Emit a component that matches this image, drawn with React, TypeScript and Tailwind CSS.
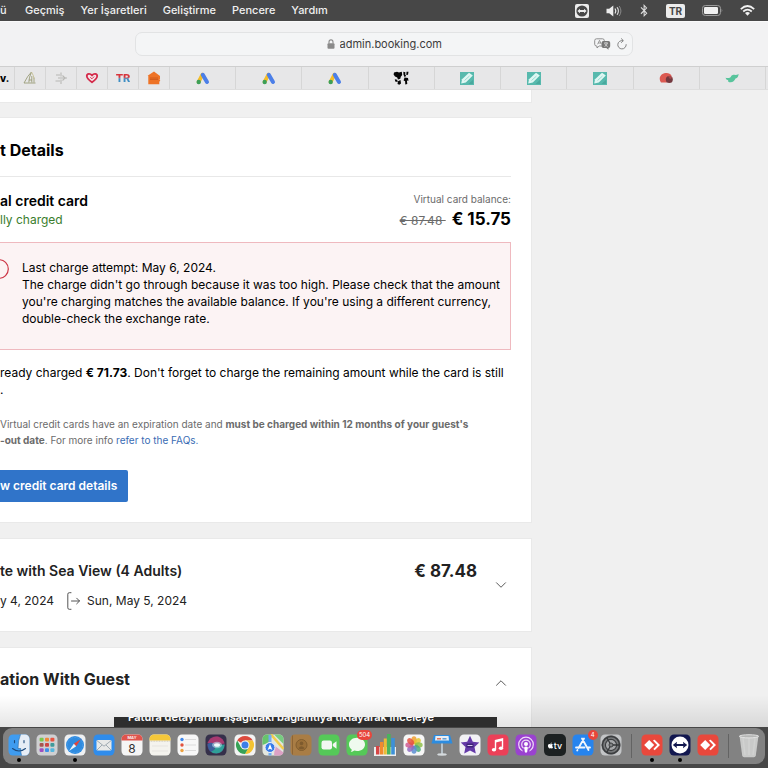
import React from "react";
import { ChevronDown, ChevronUp } from "lucide-react";
import { FaApple, FaBluetoothB } from "react-icons/fa";

const menuItems = ["Geçmiş", "Yer İşaretleri", "Geliştirme", "Pencere", "Yardım"];

const TeamViewerGlyph = () => (
  <svg viewBox="0 0 14 14" className="h-[14px] w-[14px]" aria-hidden="true">
    <rect width="14" height="14" rx="2" fill="#ececec" />
    <circle cx="7" cy="7" r="5.6" fill="#474747" />
    <path d="M2.4 7 5 4.8v1.3h4V4.800L11.600 7 9 9.200V7.900H5v1.300z" fill="#ececec" />
  </svg>
);

const VolumeGlyph = () => (
  <svg viewBox="0 0 16 14" className="h-[14px] w-[16px]" aria-hidden="true">
    <path d="M0.500 4.800h2.700L7.300 1.500v11L3.200 9.200H0.500z" fill="#ececec" />
    <path d="M9.200 5q1.300 2 0 4" fill="none" stroke="#ececec" strokeWidth="1.200" strokeLinecap="round" />
    <path d="M11.300 3.600q2.300 3.400 0 6.800" fill="none" stroke="#cfcfcf" strokeWidth="1.200" strokeLinecap="round" />
    <path d="M13.400 2.300q3.300 4.700 0 9.400" fill="none" stroke="#8a8a8a" strokeWidth="1" strokeLinecap="round" />
  </svg>
);

const BatteryGlyph = () => (
  <svg viewBox="0 0 21 11" className="h-[11px] w-[21px]" aria-hidden="true">
    <rect x="0.500" y="0.500" width="18" height="10" rx="2.800" fill="none" stroke="#9b9b9b" />
    <rect x="2" y="2" width="14" height="7" rx="1.300" fill="#f0f0f0" />
    <path d="M19.700 3.600q1.300 1.900 0 3.800z" fill="#9b9b9b" />
  </svg>
);

const WifiGlyph = () => (
  <svg viewBox="0 0 15 11" className="h-[11px] w-[15px]" fill="none" stroke="#f2f2f2" strokeWidth="1.700" aria-hidden="true">
    <path d="M0.800 4.100q6.700-6.200 13.400 0" />
    <path d="M3.200 6.500q4.300-3.900 8.600 0" />
    <path d="M5 8.100q2.500-2 5 0L7.500 10.700z" fill="#f2f2f2" stroke="none" />
  </svg>
);

const MenuBar = () => (
  <header className="flex h-[21px] shrink-0 items-center justify-between overflow-hidden bg-[#474747] pr-[13px] text-[11px] font-medium text-[#f0f0f0]">
    <nav className="flex items-center gap-4 whitespace-nowrap">
      <span className="w-[9px]">ü</span>
      {menuItems.map((item) => (
        <button key={item} type="button">
          {item}
        </button>
      ))}
    </nav>
    <div className="flex items-center gap-[17px]">
      <TeamViewerGlyph />
      <VolumeGlyph />
      <FaBluetoothB className="h-[13px] w-[10px] text-[#dcdcdc]" />
      <span className="flex h-[14px] w-[19px] items-center justify-center rounded-xs bg-[#ececec] text-[10px] leading-none font-bold text-[#474747]">
        TR
      </span>
      <BatteryGlyph />
      <WifiGlyph />
    </div>
  </header>
);

const Toolbar = () => (
  <div className="flex h-[45px] shrink-0 items-center border-t border-[#fafafa] bg-[#f2f2f3] px-[135px]">
    <div className="relative flex h-6 flex-1 items-center justify-center gap-[5px] rounded-[7px] border border-[#e2e3e4] bg-[#f4f5f6]">
      <svg viewBox="0 0 8 10" className="h-[10px] w-[8px]" aria-hidden="true">
        <rect x="0.500" y="4.300" width="7" height="5.400" rx="1" fill="#8a8a8a" />
        <path d="M2 4.500V2.900a2 2 0 0 1 4 0v1.600" fill="none" stroke="#8a8a8a" strokeWidth="1.100" />
      </svg>
      <input
        type="text"
        aria-label="Address"
        defaultValue="admin.booking.com"
        className="w-[102px] bg-transparent text-[11px] text-[#3c3c3c] outline-none"
      />
      <div className="absolute right-1 flex items-center gap-[5px]">
        <button type="button" aria-label="Translate">
          <svg viewBox="0 0 17 12" className="h-[12px] w-[17px]" aria-hidden="true">
            <path
              d="M2.500 0.800h6a1.800 1.800 0 0 1 1.800 1.800v3.600A1.800 1.800 0 0 1 8.500 8H5.200L3 10V8h-.5A1.800 1.800 0 0 1 .7 6.200V2.600A1.800 1.800 0 0 1 2.500.8z"
              fill="#f4f5f6"
              stroke="#858585"
              strokeWidth="0.900"
            />
            <path d="M3.600 6.300 5.500 2.300l1.900 4M4.300 5h2.400" fill="none" stroke="#858585" strokeWidth="0.800" />
            <path d="M9.300 3h5.200a1.700 1.700 0 0 1 1.700 1.700v3.600a1.700 1.700 0 0 1-1.700 1.700v1.800L12.300 10h-3a1.700 1.700 0 0 1-1.700-1.700V4.700A1.700 1.700 0 0 1 9.300 3z" fill="#777" />
            <path d="M10 5h4M12 4.200V5M10.500 8.500Q13 7.500 13.300 5M10.700 5.500q.8 2.200 3 3" fill="none" stroke="#e8e8e8" strokeWidth="0.700" />
          </svg>
        </button>
        <button type="button" aria-label="Reload">
          <svg viewBox="0 0 12 12" className="h-[12px] w-[12px]" fill="none" stroke="#777" strokeWidth="0.900" strokeLinecap="round" aria-hidden="true">
            <path d="M10.200 6.600A4.200 4.200 0 1 1 6.800 2.600" />
            <path d="M5.400 0.700 7.300 2.600 5.400 4.500" />
          </svg>
        </button>
      </div>
    </div>
  </div>
);

const SailTab = () => (
  <svg viewBox="0 0 14 14" className="h-[14px] w-[14px]" fill="none" stroke="#9a9c78" strokeWidth="0.900" aria-hidden="true">
    <path d="M8.500 1Q5 4 1 12h11.500" />
    <path d="M8.500 1Q6 6 5.800 11.500M8.800 5v6.500M11 6.500v5M5.800 9H9" />
    <path d="M8.500 1q2.500 4 2.500 7" stroke="#c5bf92" />
  </svg>
);

const ArrowsTab = () => (
  <svg viewBox="0 0 14 14" className="h-[14px] w-[14px]" fill="none" stroke="#b8b8b4" strokeWidth="1.100" aria-hidden="true">
    <path d="M2 4h4M1.500 10h4.500M4 7h9M7 1.500v4M7 8.500V13" />
    <path d="M8.500 4.500 11 7 8.500 9.500" />
  </svg>
);

const HeartTab = () => (
  <svg viewBox="0 0 14 12" className="h-[12px] w-[14px]" aria-hidden="true">
    <path
      d="M7 10.300Q1.800 6.600 1.800 4C1.800 1.400 5.200 1 7 3.500 8.800 1 12.200 1.400 12.200 4 12.200 6.600 7 10.300 7 10.300z"
      fill="#f5e6ea"
      stroke="#d42b4b"
      strokeWidth="1.800"
      strokeLinejoin="round"
    />
    <path d="M5.200 5.300 7 6.800l2.200-2.300" fill="none" stroke="#d42b4b" strokeWidth="0.900" />
  </svg>
);

const HouseTab = () => (
  <svg viewBox="0 0 14 14" className="h-[14px] w-[14px]" aria-hidden="true">
    <path d="M7 0.500 13 5v3.200h-.7l1 1.300-1 1.200v2.500H1.300V5L.6 4.800z" fill="#ee7326" />
    <path d="M3 7h8M3 8.400h8" stroke="#c9551a" strokeWidth="0.800" />
  </svg>
);

const AdsTab = () => (
  <svg viewBox="0 0 14 13" className="h-[13px] w-[14px]" aria-hidden="true">
    <path d="M6.300 2.800 2.600 9.800" stroke="#f5bd28" strokeWidth="3.800" strokeLinecap="round" />
    <path d="M6.800 2.800 11 10" stroke="#4c7fe8" strokeWidth="4" strokeLinecap="round" />
    <circle cx="2.700" cy="10" r="2.200" fill="#3c9f57" />
  </svg>
);

const MapTab = () => (
  <svg viewBox="0 0 16 14" className="h-[14px] w-[16px]" fill="#050505" aria-hidden="true">
    <path d="M1 1.500 4 .8l2 .7L8.800.8 9.200 4 7.800 5.800 7.300 7.800 5 8.500 4.200 6.500 2 5.500.6 3.500zM10.300.8l2.100.4-.2 2.200 1 1.600-1.700 1-1-2.200zM13.500.8h2l-.5 3-1.700.3zM1.800 8.200l2.400.5.5 2.400-2.500-.5zM5 10.300l2.500-1.200.5 3.400-1.700 1.300-1.800-.9zM11.500 6.600l3.500.5.5 2.700-1.600-.3.400 3.500-2 .5-.2-3.300-1.500-.6z" />
  </svg>
);

const PencilTab = () => (
  <svg viewBox="0 0 14 13" className="h-[13px] w-[14px]" aria-hidden="true">
    <rect width="14" height="13" fill="#57b9ad" />
    <path d="M1.200 11.500 2 7.200 9 .7l3.800 2.700-7 7z" fill="#dff7f3" />
    <path d="M4.500 8.500 9.500 4" stroke="#9bdbd2" strokeWidth="1" />
    <path d="M8.500 12 13 7.700V12z" fill="#49a89d" />
  </svg>
);

const CirclesTab = () => (
  <svg viewBox="0 0 14 12" className="h-[12px] w-[14px]" aria-hidden="true">
    <path d="M2 10.500C-.8 7 1.200 1.500 6.500 1c3-.3 4.800.6 6 2.500L8 10.500z" fill="#dc5a52" />
    <circle cx="10.300" cy="7.400" r="3.500" fill="#74393f" />
    <path d="M9 4.200a3.600 3.600 0 0 1 4.500 1.500L11 7z" fill="#a8484a" />
  </svg>
);

const BirdTab = () => (
  <svg viewBox="0 0 14 10" className="h-[10px] w-[14px]" aria-hidden="true">
    <path d="M0.500 4.800Q3.500 5.600 5.500 4.200 6.500 1.200 9.200 1.800 11.500 2.300 13.600 1 13.500 4.500 10.500 5.600 9 9.400 5.500 9.300 2.500 9.300 3.200 7.300 1 7 .5 4.800z" fill="#58c49c" />
  </svg>
);

const smallTabs = [
  { name: "Sail", icon: <SailTab /> },
  { name: "Arrows", icon: <ArrowsTab /> },
  { name: "Favorites", icon: <HeartTab /> },
  {
    name: "TR",
    icon: (
      <span className="bg-linear-to-b from-[#d8343c] from-45% to-[#3f8fc4] to-55% bg-clip-text text-[11px] font-extrabold text-transparent">
        TR
      </span>
    ),
  },
  { name: "House", icon: <HouseTab /> },
];

const wideTabs = [
  { name: "Ads 1", icon: <AdsTab /> },
  { name: "Ads 2", icon: <AdsTab /> },
  { name: "Ads 3", icon: <AdsTab /> },
  { name: "Map", icon: <MapTab /> },
  { name: "Notes 1", icon: <PencilTab /> },
  { name: "Notes 2", icon: <PencilTab /> },
  { name: "Notes 3", icon: <PencilTab /> },
  { name: "Circles", icon: <CirclesTab /> },
  { name: "Bird", icon: <BirdTab /> },
];

const TabBar = () => (
  <div className="flex h-6 shrink-0 border-y border-t-[#cfcfcf] border-b-[#dedede] bg-[#e7e7e8] pr-[2px]">
    <button type="button" className="flex w-[15px] items-center border-r border-[#d6d6d6] text-[10px] font-extrabold text-black">
      v.
    </button>
    {smallTabs.map((tab) => (
      <button key={tab.name} type="button" aria-label={tab.name} className="flex w-[31px] items-center justify-center border-r border-[#d6d6d6]">
        {tab.icon}
      </button>
    ))}
    {wideTabs.map((tab) => (
      <button key={tab.name} type="button" aria-label={tab.name} className="flex flex-1 items-center justify-center border-r border-[#d6d6d6]">
        {tab.icon}
      </button>
    ))}
  </div>
);

const PaymentCard = () => (
  <section className="border-y border-r border-[#e9e9e9] bg-white pr-5 pb-5">
    <h2 className="border-b border-[#e8e8e8] pt-5 pb-[14px] text-[16px] leading-6 font-bold">t Details</h2>
    <div className="flex items-start justify-between pt-[14px]">
      <div>
        <h3 className="text-[14px] leading-5 font-semibold">al credit card</h3>
        <p className="text-[12px] leading-[17px] text-[#3a7d2c]">lly charged</p>
      </div>
      <div className="text-right">
        <p className="text-[10px] leading-4 text-[#6b6b6b]">Virtual card balance:</p>
        <p className="text-[17px] leading-6 font-bold">
          <s className="mr-1.5 text-[12px] font-normal whitespace-pre text-[#6b6b6b]">€ 87.48 </s>€ 15.75
        </p>
      </div>
    </div>
    <div className="mt-[9px] flex gap-[13px] border border-l-0 border-[#efb9bf] bg-[#fcf3f4] pt-4 pb-[22px]">
      <svg viewBox="0 0 9 20" className="h-5 w-[9px] shrink-0" aria-hidden="true">
        <circle cx="-1" cy="10" r="9.300" fill="none" stroke="#cc3344" strokeWidth="1.200" />
      </svg>
      <p className="text-[12px] leading-[17px]">
        Last charge attempt: May 6, 2024.
        <br />
        The charge didn't go through because it was too high. Please check that the amount
        <br />
        you're charging matches the available balance. If you're using a different currency,
        <br />
        double-check the exchange rate.
      </p>
    </div>
    <p className="mt-[14px] text-[12px] leading-[17px] whitespace-nowrap">
      ready charged <b>€ 71.73</b>. Don't forget to charge the remaining amount while the card is still
      <br />.
    </p>
    <p className="mt-[18px] text-[10px] leading-4 whitespace-nowrap text-[#6b6b6b]">
      Virtual credit cards have an expiration date and <b>must be charged within 12 months of your guest's</b>
      <br />
      <b>-out date</b>. For more info{" "}
      <a href="#faqs" className="text-[#3a6cb4]">
        refer to the FAQs.
      </a>
    </p>
    <button type="button" className="mt-[22px] block h-8 w-32 rounded-r-xs bg-[#3074c9] pr-[11px] text-right text-[12px] font-semibold whitespace-nowrap text-white">
      w credit card details
    </button>
  </section>
);

const RoomCard = () => (
  <section className="mt-[15px] flex items-start justify-between border-y border-r border-[#e9e9e9] bg-white pt-5 pr-[21px] pb-5 text-[#222]">
    <div>
      <h2 className="text-[14px] leading-6 font-semibold">te with Sea View (4 Adults)</h2>
      <div className="mt-2 flex items-center gap-[13px] text-[12px] leading-5">
        <span>y 4, 2024</span>
        <span className="flex items-center gap-[6px]">
          <svg viewBox="0 0 14 18" className="h-[18px] w-[14px]" fill="none" stroke="#555" strokeWidth="1" strokeLinecap="round" strokeLinejoin="round" aria-hidden="true">
            <path d="M4 0.700H2.300Q.8.700.8 2.200v13.600q0 1.500 1.500 1.500H4" />
            <path d="M4.500 9h8M9.700 6.200 12.500 9l-2.800 2.800" />
          </svg>
          Sun, May 5, 2024
        </span>
      </div>
    </div>
    <div className="flex items-start gap-[15px]">
      <strong className="text-[17px] leading-6">€ 87.48</strong>
      <button type="button" aria-label="Expand room" className="pt-[17px]">
        <ChevronDown className="h-[18px] w-[18px] text-[#555]" strokeWidth={1.3} />
      </button>
    </div>
  </section>
);

const ConversationCard = () => (
  <section className="mt-[15px] flex h-[100px] items-start justify-between border-y border-r border-[#e9e9e9] bg-white pt-[19px] pr-[21px] text-[#222]">
    <h2 className="text-[16px] leading-6 font-bold">ation With Guest</h2>
    <button type="button" aria-label="Collapse conversation" className="pt-[7px]">
      <ChevronUp className="h-[18px] w-[18px] text-[#555]" strokeWidth={1.3} />
    </button>
  </section>
);

// All dock drawings share a 22 unit square.
const Tile: React.FC<{ fill: string; children?: React.ReactNode }> = ({ fill, children }) => (
  <svg viewBox="0 0 22 22" className="h-[22px] w-[22px]" aria-hidden="true">
    <rect x="0.500" y="0.500" width="21" height="21" rx="4.500" fill={fill} />
    {children}
  </svg>
);

const Finder = () => (
  <Tile fill="#3f9cf0">
    <path d="M12.500.5H17a4.500 4.500 0 0 1 4.500 4.500v12a4.500 4.500 0 0 1-4.500 4.500h-3.500q-1-3.500-.8-7H10Q10 6 12.500.5z" fill="#e6edf6" />
    <path d="M6.500 6.500v2.300M16 6.500v2.300M4.500 14.500q6.500 5 13 0" fill="none" stroke="#1d4a7c" strokeWidth="1.100" strokeLinecap="round" />
    <path d="M12.500.5Q10 6 10 14.500h2.700q-.2 3.500.8 7" fill="none" stroke="#27679f" strokeWidth="0.600" />
  </Tile>
);

const launchpadDots = ["#7ac74c", "#f0883a", "#e8533f", "#a8544e", "#cc4545", "#3f9a9a", "#9e4fc0", "#3f8fe8", "#55b8e0"];

const Launchpad = () => (
  <Tile fill="#cfd0d2">
    {launchpadDots.map((color, i) => (
      <rect key={color} x={3.6 + (i % 3) * 5.4} y={3.8 + Math.floor(i / 3) * 5.2} width="4" height="3.800" rx="1" fill={color} />
    ))}
  </Tile>
);

const Safari = () => (
  <Tile fill="#eef0f2">
    <circle cx="11" cy="11" r="9" fill="#2e8be0" />
    <circle cx="11" cy="11" r="7.600" fill="none" stroke="#8cc1f0" strokeWidth="0.500" strokeDasharray="0.500 1" />
    <path d="M17 5 12.200 12.200 9.800 9.800z" fill="#e2453c" />
    <path d="M5 17 9.800 9.800l2.400 2.400z" fill="#f0f4f8" />
  </Tile>
);

const Mail = () => (
  <Tile fill="#2f8ceb">
    <rect x="3.500" y="6" width="15" height="10.500" rx="1.200" fill="#e7e9e8" />
    <path d="m4 6.700 7 5.500 7-5.500M4 16l5-5M18 16l-5-5" fill="none" stroke="#8d9aa4" strokeWidth="0.800" />
  </Tile>
);

const Calendar = () => (
  <Tile fill="#f5f5f5">
    <path d="M5 .5h12A4.500 4.500 0 0 1 21.500 5v1.500H.5V5A4.500 4.500 0 0 1 5 .5z" fill="#e0544c" />
    <text x="11" y="5.300" textAnchor="middle" fontSize="4" fontWeight="600" fill="#fff">
      MAY
    </text>
    <text x="11" y="18.500" textAnchor="middle" fontSize="12" fill="#333">
      8
    </text>
  </Tile>
);

const Notes = () => (
  <Tile fill="#f4f3ee">
    <path d="M5 .5h12A4.500 4.500 0 0 1 21.500 5v1.500H.5V5A4.500 4.500 0 0 1 5 .5z" fill="#f5c83a" />
    <path d="M0.500 7.200h21" stroke="#aaa48c" strokeWidth="0.600" strokeDasharray="0.800 0.800" />
    <path d="M3 12h16M3 17h16" stroke="#dddcd6" strokeWidth="0.600" />
  </Tile>
);

const Reminders = () => (
  <Tile fill="#f7f7f7">
    <path d="M8 5.500h11M8 11h11M8 16.500h11" stroke="#cfcfcf" strokeWidth="0.700" />
    <circle cx="5" cy="5.500" r="1.700" fill="#3e86ea" />
    <circle cx="5" cy="11" r="1.700" fill="#e1523f" />
    <circle cx="5" cy="16.500" r="1.700" fill="#eda13f" />
  </Tile>
);

const Siri = () => (
  <Tile fill="#35304a">
    <circle cx="11" cy="11" r="9" fill="#4c3358" />
    <path d="M2.500 9Q5.500 1.500 13 2.500q5.500 2 6.500 7l-8.500 1z" fill="#a83a70" />
    <path d="M2.500 10q4-3 8.500 1-2 6.500-5 7Q2.500 15 2.500 10z" fill="#3b5f9c" />
    <path d="M19.800 10.500q-1 8.500-8.300 9Q7 19.300 6 17.500q4-1 5-6.500z" fill="#2f9f98" />
    <ellipse cx="12" cy="11" rx="5" ry="3.200" fill="#b9dce8" opacity="0.600" />
    <ellipse cx="12" cy="11" rx="3" ry="1.800" fill="#f0fafc" />
  </Tile>
);

const Chrome = () => (
  <Tile fill="#f3f3f3">
    <path d="M11 11 3.200 6.500A9 9 0 0 1 18.800 6.500H11z" fill="#dc4a3d" />
    <path d="M18.800 6.500A9 9 0 0 1 11 20l4-7-4-6.500z" fill="#f3c331" />
    <path d="M3.200 6.500A9 9 0 0 0 11 20l3.900-6.800L7 13.200z" fill="#37a256" />
    <circle cx="11" cy="11" r="4.500" fill="#f6f6f6" />
    <circle cx="11" cy="11" r="3.500" fill="#3d7fe6" />
  </Tile>
);

const Maps = () => (
  <Tile fill="#e3e7df">
    <path d="M.5 5A4.500 4.500 0 0 1 5 .5h5L8 8 .5 11z" fill="#67c46c" />
    <path d="M12 .5h5A4.500 4.500 0 0 1 21.500 5v5z" fill="#77cd80" />
    <path d="M13 12l8.500 6.500A4.500 4.500 0 0 1 17 21.500h-5z" fill="#dca1c5" />
    <path d="M9 .5 21.500 15" stroke="#f2cb4b" strokeWidth="2.500" />
    <path d="M8 21.500V1" stroke="#74acee" strokeWidth="3" />
    <circle cx="8" cy="13.500" r="5" fill="#377ce8" stroke="#eef2f8" strokeWidth="1" />
    <path d="M8 10l2.400 6L8 14.800 5.600 16z" fill="#fff" />
  </Tile>
);

const Contacts = () => (
  <Tile fill="#a97d45">
    <path d="M2.500 1.500v19" stroke="#8d6535" strokeWidth="1" />
    <circle cx="11.500" cy="11" r="5.500" fill="#9b7039" stroke="#7e5b2e" strokeWidth="0.900" />
    <circle cx="11.500" cy="9.400" r="1.800" fill="#7e5b2e" />
    <path d="M8.300 14.200q3.200-4 6.400 0-3.200 2.300-6.400 0z" fill="#7e5b2e" />
  </Tile>
);

const FaceTime = () => (
  <Tile fill="#55c958">
    <rect x="3.500" y="6.500" width="10.500" height="9" rx="2.200" fill="#f2f7f2" />
    <path d="m14.800 10 3.700-2.700v7.400L14.800 12z" fill="#f2f7f2" />
  </Tile>
);

const Messages = () => (
  <Tile fill="#55c958">
    <path d="M11 3.800c4.600 0 8 2.900 8 6.600s-3.400 6.600-8 6.600q-1.500 0-2.700-.4Q6.700 18 4.700 18q1.200-1.200 1-2.600C4 14.200 3 12.500 3 10.400c0-3.700 3.400-6.600 8-6.600z" fill="#effaee" />
  </Tile>
);

const Numbers = () => (
  <svg viewBox="0 0 22 22" className="h-[22px] w-[22px]" aria-hidden="true">
    <path d="M0 13h22v9H0z" fill="#eee" />
    <rect x="2" y="12" width="3.400" height="8.500" fill="#d64545" />
    <rect x="6" y="8" width="3.400" height="12.500" fill="#f08a2e" />
    <rect x="9.800" y="4.500" width="3" height="16" fill="#e8bd36" />
    <rect x="13" y="0" width="3.600" height="20.500" fill="#4ab35c" />
    <rect x="17.200" y="4" width="3.600" height="16.500" fill="#3c91d8" />
  </svg>
);

const petals = ["#f0a030", "#e4c531", "#8fc04a", "#4bab7c", "#5a8ed2", "#8d6bc0", "#cf5b92", "#e5523f"];

const Photos = () => (
  <Tile fill="#f6f6f6">
    {petals.map((color, i) => (
      <ellipse key={color} cx="11" cy="6.300" rx="2.700" ry="4" fill={color} opacity="0.850" transform={`rotate(${i * 45} 11 11)`} />
    ))}
  </Tile>
);

const Keynote = () => (
  <svg viewBox="0 0 22 22" className="h-[22px] w-[22px]" aria-hidden="true">
    <path d="M3 1h16l2.500 8.500H.5z" fill="#2c8ce0" />
    <path d="M4.500 2h13l.5 4.500H4z" fill="#e8eef3" />
    <path d="M6 4.800h4" stroke="#dc6144" strokeWidth="1.300" />
    <path d="M11.500 4.800h4" stroke="#4b91d2" strokeWidth="1.300" />
    <path d="M11 9.500V20" stroke="#c5d3dc" strokeWidth="1.600" />
    <ellipse cx="11" cy="20.500" rx="4.800" ry="1.200" fill="#d5dadd" />
  </svg>
);

const IMovie = () => (
  <Tile fill="#f2f1f5">
    <path d="m11 1.800 2.800 6 6.500.8-4.800 4.500 1.300 6.500L11 16.400l-5.800 3.200 1.300-6.500L1.700 8.600l6.500-.8z" fill="#6439a8" />
    <path d="M7.500 9.500h7v4h-7z" fill="#3d2278" />
    <path d="M8.500 11.500h5" stroke="#d8caef" strokeWidth="1" />
  </Tile>
);

const Music = () => (
  <Tile fill="#ec4058">
    <path d="M8.500 15.300V6.500l7-1.600v8.800" fill="none" stroke="#fff" strokeWidth="1.400" />
    <path d="m8.500 7.500 7-1.600" stroke="#fff" strokeWidth="2" />
    <ellipse cx="7" cy="15.700" rx="2.200" ry="1.700" fill="#fff" />
    <ellipse cx="14" cy="14.200" rx="2.200" ry="1.700" fill="#fff" />
  </Tile>
);

const Podcasts = () => (
  <Tile fill="#9a42d0">
    <circle cx="11" cy="10.500" r="7.300" fill="none" stroke="#f0def8" strokeWidth="1.200" />
    <circle cx="11" cy="10.500" r="4.300" fill="none" stroke="#f0def8" strokeWidth="1.200" />
    <path d="M7.500 14.500h7V19h-7z" fill="#9a42d0" />
    <circle cx="11" cy="10" r="2" fill="#fff" />
    <path d="M9.200 13.200q1.800-1.200 3.600 0l-.6 4.800q-1.200 1.300-2.400 0z" fill="#fff" />
  </Tile>
);

const AppleTv = () => (
  <span className="flex h-[22px] w-[22px] items-center justify-center rounded-[5px] bg-[#1c2122] text-white">
    <FaApple className="h-[7px] w-[7px]" />
    <span className="text-[9px] leading-none font-medium">tv</span>
  </span>
);

const AppStore = () => (
  <Tile fill="#2684ee">
    <g stroke="#f2f7fc" strokeWidth="1.800" strokeLinecap="round">
      <path d="M12 4.500 6.500 14M10 4.500 16.500 16M4 13.500h8.500M15.500 13.500H18M5.500 16l-.3.500" />
    </g>
  </Tile>
);

const Settings = () => (
  <Tile fill="#c3c5c7">
    <circle cx="11" cy="11" r="8.600" fill="#77797b" stroke="#393b3d" strokeWidth="1.600" />
    <circle cx="11" cy="11" r="9.300" fill="none" stroke="#505254" strokeWidth="0.800" strokeDasharray="0.700 0.700" />
    <circle cx="11" cy="11" r="5.600" fill="#a5a7a9" stroke="#3b3d3f" strokeWidth="1.100" />
    <path d="M11 11h8M11 11 7 4M11 11l-4 7" stroke="#36383a" strokeWidth="1.300" />
    <circle cx="11" cy="11" r="2" fill="#808284" stroke="#36383a" strokeWidth="0.900" />
  </Tile>
);

const AnyDesk = () => (
  <Tile fill="#e9483c">
    <path d="m8.200 6 5 5-5 5-5-5z" fill="#fff" />
    <path d="m12.300 6 1.400-.2L19 11l-5.300 5.200-1.400-1.300L16.200 11l-3.900-3.900z" fill="#fff" />
  </Tile>
);

const TeamViewer = () => (
  <Tile fill="#12174f">
    <circle cx="11" cy="11" r="8.500" fill="#fff" />
    <path d="M3.800 11 8 7.800l-.4 2.200h6.800l-.4-2.200 4.200 3.200-4.200 3.200.4-2.200H7.600l.4 2.200z" fill="#12174f" />
  </Tile>
);

const Trash = () => (
  <svg viewBox="0 0 22 24" className="h-6 w-[22px]" aria-hidden="true">
    <path d="M1.500 1.800 4.200 21.500q.3 1.800 2 1.800h9.600q1.700 0 2-1.800L20.500 1.800z" fill="#c9cac9" />
    <path d="M5 4l2 17M17 4l-2 17M11 4v17" stroke="#d1d2d1" strokeWidth="1.500" />
    <ellipse cx="11" cy="2.300" rx="9.600" ry="1.600" fill="#b5b6b5" stroke="#e8e8e8" strokeWidth="0.900" />
  </svg>
);

type DockApp = {
  name: string;
  icon: React.ReactNode;
  running?: boolean;
  badge?: string;
};

const apps: DockApp[] = [
  { name: "Finder", icon: <Finder />, running: true },
  { name: "Launchpad", icon: <Launchpad /> },
  { name: "Safari", icon: <Safari />, running: true },
  { name: "Mail", icon: <Mail /> },
  { name: "Calendar", icon: <Calendar /> },
  { name: "Notes", icon: <Notes /> },
  { name: "Reminders", icon: <Reminders /> },
  { name: "Siri", icon: <Siri /> },
  { name: "Chrome", icon: <Chrome /> },
  { name: "Maps", icon: <Maps /> },
  { name: "Contacts", icon: <Contacts /> },
  { name: "FaceTime", icon: <FaceTime /> },
  { name: "Messages", icon: <Messages />, badge: "504" },
  { name: "Numbers", icon: <Numbers /> },
  { name: "Photos", icon: <Photos /> },
  { name: "Keynote", icon: <Keynote /> },
  { name: "iMovie", icon: <IMovie /> },
  { name: "Music", icon: <Music /> },
  { name: "Podcasts", icon: <Podcasts /> },
  { name: "Apple TV", icon: <AppleTv /> },
  { name: "App Store", icon: <AppStore />, badge: "4" },
  { name: "Settings", icon: <Settings /> },
];

const remoteApps: DockApp[] = [
  { name: "AnyDesk", icon: <AnyDesk />, running: true },
  { name: "TeamViewer", icon: <TeamViewer />, running: true },
  { name: "AnyDesk 2", icon: <AnyDesk /> },
];

const DockButton: React.FC<{ app: DockApp }> = ({ app }) => (
  <button type="button" aria-label={app.name} className="relative h-[22px] w-[22px]">
    {app.icon}
    {app.badge && (
      <span className="absolute -top-1 -right-1 flex h-[10px] min-w-[10px] items-center justify-center rounded-full bg-[#e8463c] px-0.5 text-[6px] leading-none text-white">
        {app.badge}
      </span>
    )}
    {app.running && <span className="absolute top-6 left-[9px] h-1 w-1 rounded-full bg-black" />}
  </button>
);

const Dock = () => (
  <footer className="shrink-0 bg-[#474747] px-[3px] pt-px pb-1">
    <div className="flex h-9 items-start rounded-[9px] bg-[#828282] px-[5px] pt-[6px]">
      <div className="flex flex-1 justify-between">
        {apps.map((app) => (
          <DockButton key={app.name} app={app} />
        ))}
      </div>
      <div className="mx-[9px] h-6 w-px bg-[#636363]" />
      <div className="flex gap-[6px]">
        {remoteApps.map((app) => (
          <DockButton key={app.name} app={app} />
        ))}
      </div>
      <div className="mx-[9px] h-6 w-px bg-[#636363]" />
      <button type="button" aria-label="Trash">
        <Trash />
      </button>
    </div>
  </footer>
);

const App = () => {
  return (
    <div className="flex h-screen flex-col overflow-hidden bg-[#f0f0f0] font-['Inter',sans-serif] text-black">
      <MenuBar />
      <Toolbar />
      <TabBar />
      <main className="relative min-h-0 flex-1 overflow-hidden">
        <div className="pr-[236px]">
          <div className="mb-[14px] h-[13px] border-r border-b border-[#e9e9e9] bg-white" />
          <PaymentCard />
          <RoomCard />
          <ConversationCard />
        </div>
        <div className="absolute inset-x-0 bottom-0 h-8 bg-linear-to-b from-transparent to-black/10" />
        <div className="absolute bottom-0 left-[114px] flex h-[10px] w-[383px] items-end overflow-hidden bg-[#2e2e2e] px-[14px] text-[11px] leading-5 font-semibold whitespace-nowrap text-white">
          Fatura detaylarını aşağıdaki bağlantıya tıklayarak inceleye
        </div>
      </main>
      <Dock />
    </div>
  );
};

export default App;
